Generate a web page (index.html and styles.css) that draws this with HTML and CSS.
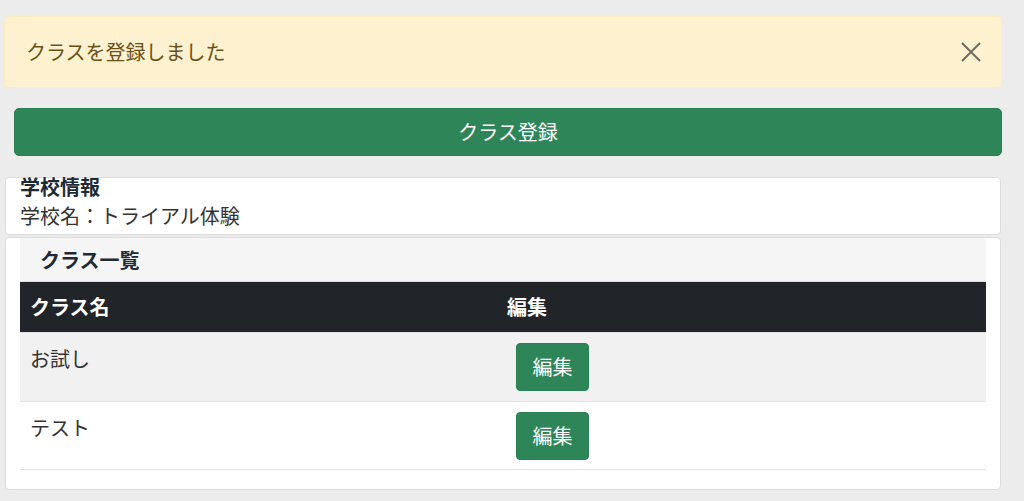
FILE: index.html
```html
<!DOCTYPE html>
<html lang="ja">
<head>
<meta charset="utf-8">
<title>クラス一覧</title>
<link rel="stylesheet" href="styles.css">
</head>
<body>
<main class="page">
  <div class="alert">
    <span class="alert-text">クラスを登録しました</span>
    <button class="alert-close" aria-label="閉じる">
      <svg width="20" height="20" viewBox="0 0 20 20"><path d="M1 1L19 19M19 1L1 19" stroke="#6f6c64" stroke-width="2" fill="none"/></svg>
    </button>
  </div>
  <button class="btn-register">クラス登録</button>
  <section class="card school">
    <div class="school-title">学校情報</div>
    <div class="school-name">学校名：トライアル体験</div>
  </section>
  <section class="card classes">
    <div class="panel">
      <div class="panel-header">クラス一覧</div>
      <table class="class-table">
        <thead>
          <tr><th class="col-name">クラス名</th><th>編集</th></tr>
        </thead>
        <tbody>
          <tr class="striped"><td>お試し</td><td><button class="btn-edit">編集</button></td></tr>
          <tr><td>テスト</td><td><button class="btn-edit">編集</button></td></tr>
        </tbody>
      </table>
    </div>
  </section>
</main>
</body>
</html>
```
FILE: styles.css
```css
* { box-sizing: border-box; }
html, body { margin: 0; padding: 0; }
body {
  background: #ececec;
  font-family: "Noto Sans CJK JP", "Noto Sans", sans-serif;
  font-size: 20px;
  color: #333;
}
.page {
  width: 998px;
  margin-left: 4px;
  padding-top: 16px;
  display: flex;
  flex-direction: column;
}
.alert {
  height: 72px;
  background: #fdf1d0;
  border: 1px solid #fbecc0;
  border-radius: 5px;
  color: #6b5118;
  display: flex;
  align-items: center;
  justify-content: space-between;
  padding: 0 20px 0 21px;
  margin-bottom: 20px;
}
.alert-text { line-height: 30px; }
.alert-close {
  border: 0;
  background: none;
  padding: 0;
  width: 20px;
  height: 20px;
  display: flex;
}
.btn-register {
  margin-left: 10px;
  height: 48px;
  background: #2e8658;
  border: 1px solid #2b8054;
  border-radius: 5px;
  color: #fff;
  font-family: inherit;
  font-size: 20px;
  line-height: 30px;
  margin-bottom: 21px;
}
.card {
  background: #fff;
  border: 1px solid #dcdcdc;
  border-radius: 4px;
  width: 996px;
  margin-left: 1px;
}
.school {
  height: 58px;
  padding: 0 14px;
  margin-bottom: 2px;
}
.school-title {
  font-weight: bold;
  color: #1f2a36;
  line-height: 29px;
  margin-top: -6px;
}
.school-name { line-height: 29px; color: #333; }
.classes {
  height: 253px;
  padding: 0 14px;
}
.panel-header {
  height: 44px;
  background: #f5f5f5;
  border-bottom: 1px solid #dedede;
  border-top-right-radius: 4px;
  padding-left: 20px;
  font-weight: bold;
  color: #1f2a36;
  display: flex;
  align-items: center;
}
.class-table {
  width: 100%;
  border-collapse: collapse;
}
.class-table th {
  background: #212529;
  color: #fff;
  text-align: left;
  height: 50px;
  padding: 0 10px;
  font-weight: bold;
  line-height: 30px;
}
.class-table th.col-name { width: 477px; }
.class-table td {
  border-top: 1px solid #e2e2e2;
  padding: 10px;
  vertical-align: top;
  line-height: 30px;
  color: #333;
}
.class-table td:first-child { padding-top: 11px; }
.class-table tbody tr:last-child td { border-bottom: 1px solid #e2e2e2; padding-bottom: 9px; }
.class-table tr.striped td { background: #f1f1f1; }
.btn-edit {
  margin-left: 9px;
  width: 73px;
  height: 48px;
  background: #2e8658;
  border: 1px solid #2b8054;
  border-radius: 4px;
  color: #fff;
  font-family: inherit;
  font-size: 20px;
  line-height: 30px;
  padding: 0;
  display: block;
}
```
